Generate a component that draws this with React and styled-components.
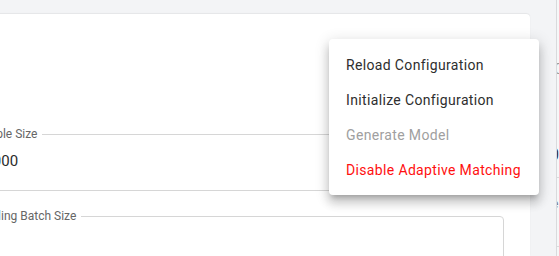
import React from 'react';
import styled, { createGlobalStyle } from 'styled-components';

const GlobalStyle = createGlobalStyle`
  html, body {
    margin: 0;
    padding: 0;
    background: #f3f4f6;
    overflow: hidden;
    font-family: Roboto, "Liberation Sans", sans-serif;
  }
`;

const Page = styled.div`
  position: relative;
  display: flex;
  height: 256px;
  padding-top: 14px;
  box-sizing: border-box;
  overflow: hidden;
`;

const Main = styled.div`
  width: 530px;
  margin-right: 26px;
  flex-shrink: 0;
  display: flex;
`;

const Card = styled.section`
  flex: 1;
  margin-left: -60px;
  padding: 113px 26px 0 18px;
  background: #fff;
  border-radius: 0 4px 0 0;
  box-shadow: 0 -1px 1px rgba(0, 0, 0, 0.05), 0 0 2px rgba(0, 0, 0, 0.04);
  display: flex;
  flex-direction: column;
  gap: 18px;
  overflow: hidden;
`;

const Field = styled.fieldset`
  margin: 0;
  padding: 0 8px;
  border: 1px solid #d6d6d6;
  border-radius: 4px;
  min-width: 0;
  height: ${p => p.$tall ? '90px' : 'auto'};
  flex-shrink: 0;
`;

const Legend = styled.legend`
  padding: 0 5px;
  font-size: 12px;
  line-height: 14px;
  color: #666;
`;

const Value = styled.div`
  padding: 0 9px 9px;
  height: 40px;
  line-height: 40px;
  font-size: 15px;
  color: #2b2b2b;
`;

const Side = styled.aside`
  flex: 1;
  margin-top: -14px;
  border-left: 1px solid #d9dadc;
  background: #f6f7f8;
  display: flex;
  flex-direction: column;
  overflow: hidden;
`;

const Frag = styled.div`
  margin-left: ${p => p.$shift}px;
  margin-top: ${p => p.$top}px;
  font-size: ${p => p.$size}px;
  line-height: 1;
  color: ${p => p.$color};
  white-space: nowrap;
`;

const Rule = styled.div`
  margin-top: ${p => p.$top}px;
  height: 1px;
  background: #dadbdd;
`;

const Menu = styled.ul`
  position: absolute;
  left: 329px;
  top: 39px;
  width: 210px;
  margin: 0;
  padding: 9px 0 7px;
  list-style: none;
  background: #fff;
  border-radius: 4px;
  box-shadow: 0 5px 5px -3px rgba(0, 0, 0, 0.2), 0 8px 10px 1px rgba(0, 0, 0, 0.14), 0 3px 14px 2px rgba(0, 0, 0, 0.12);
`;

const Item = styled.li`
  padding: 7px 17px;
  font-size: 14px;
  line-height: 21px;
  letter-spacing: 0.35px;
  white-space: nowrap;
  color: ${p => p.$tone === 'danger' ? '#ff1010' : p.$tone === 'disabled' ? '#a0a0a0' : '#2e2e2e'};
  cursor: ${p => p.$tone === 'disabled' ? 'default' : 'pointer'};
`;

const items = [
  { label: 'Reload Configuration' },
  { label: 'Initialize Configuration' },
  { label: 'Generate Model', tone: 'disabled' },
  { label: 'Disable Adaptive Matching', tone: 'danger' },
];

export default function App() {
  return (
    <>
      <GlobalStyle />
      <Page>
        <Main>
          <Card>
            <Field>
              <Legend>Sample Size</Legend>
              <Value>10000</Value>
            </Field>
            <Field $tall>
              <Legend>Labeling Batch Size</Legend>
            </Field>
          </Card>
        </Main>
        <Side>
          <Frag $shift={-8} $top={62} $size={15} $color="#9a9a9a">(0)</Frag>
          <Frag $shift={-6} $top={47} $size={10} $color="#888">1</Frag>
          <Frag $shift={-7} $top={13} $size={16} $color="#333">0</Frag>
          <Rule $top={14} />
          <Frag $shift={-5} $top={20} $size={12} $color="#777">e</Frag>
          <Rule $top={36} />
        </Side>
        <Menu>
          {items.map(it => (
            <Item key={it.label} $tone={it.tone}>{it.label}</Item>
          ))}
        </Menu>
      </Page>
    </>
  );
}
